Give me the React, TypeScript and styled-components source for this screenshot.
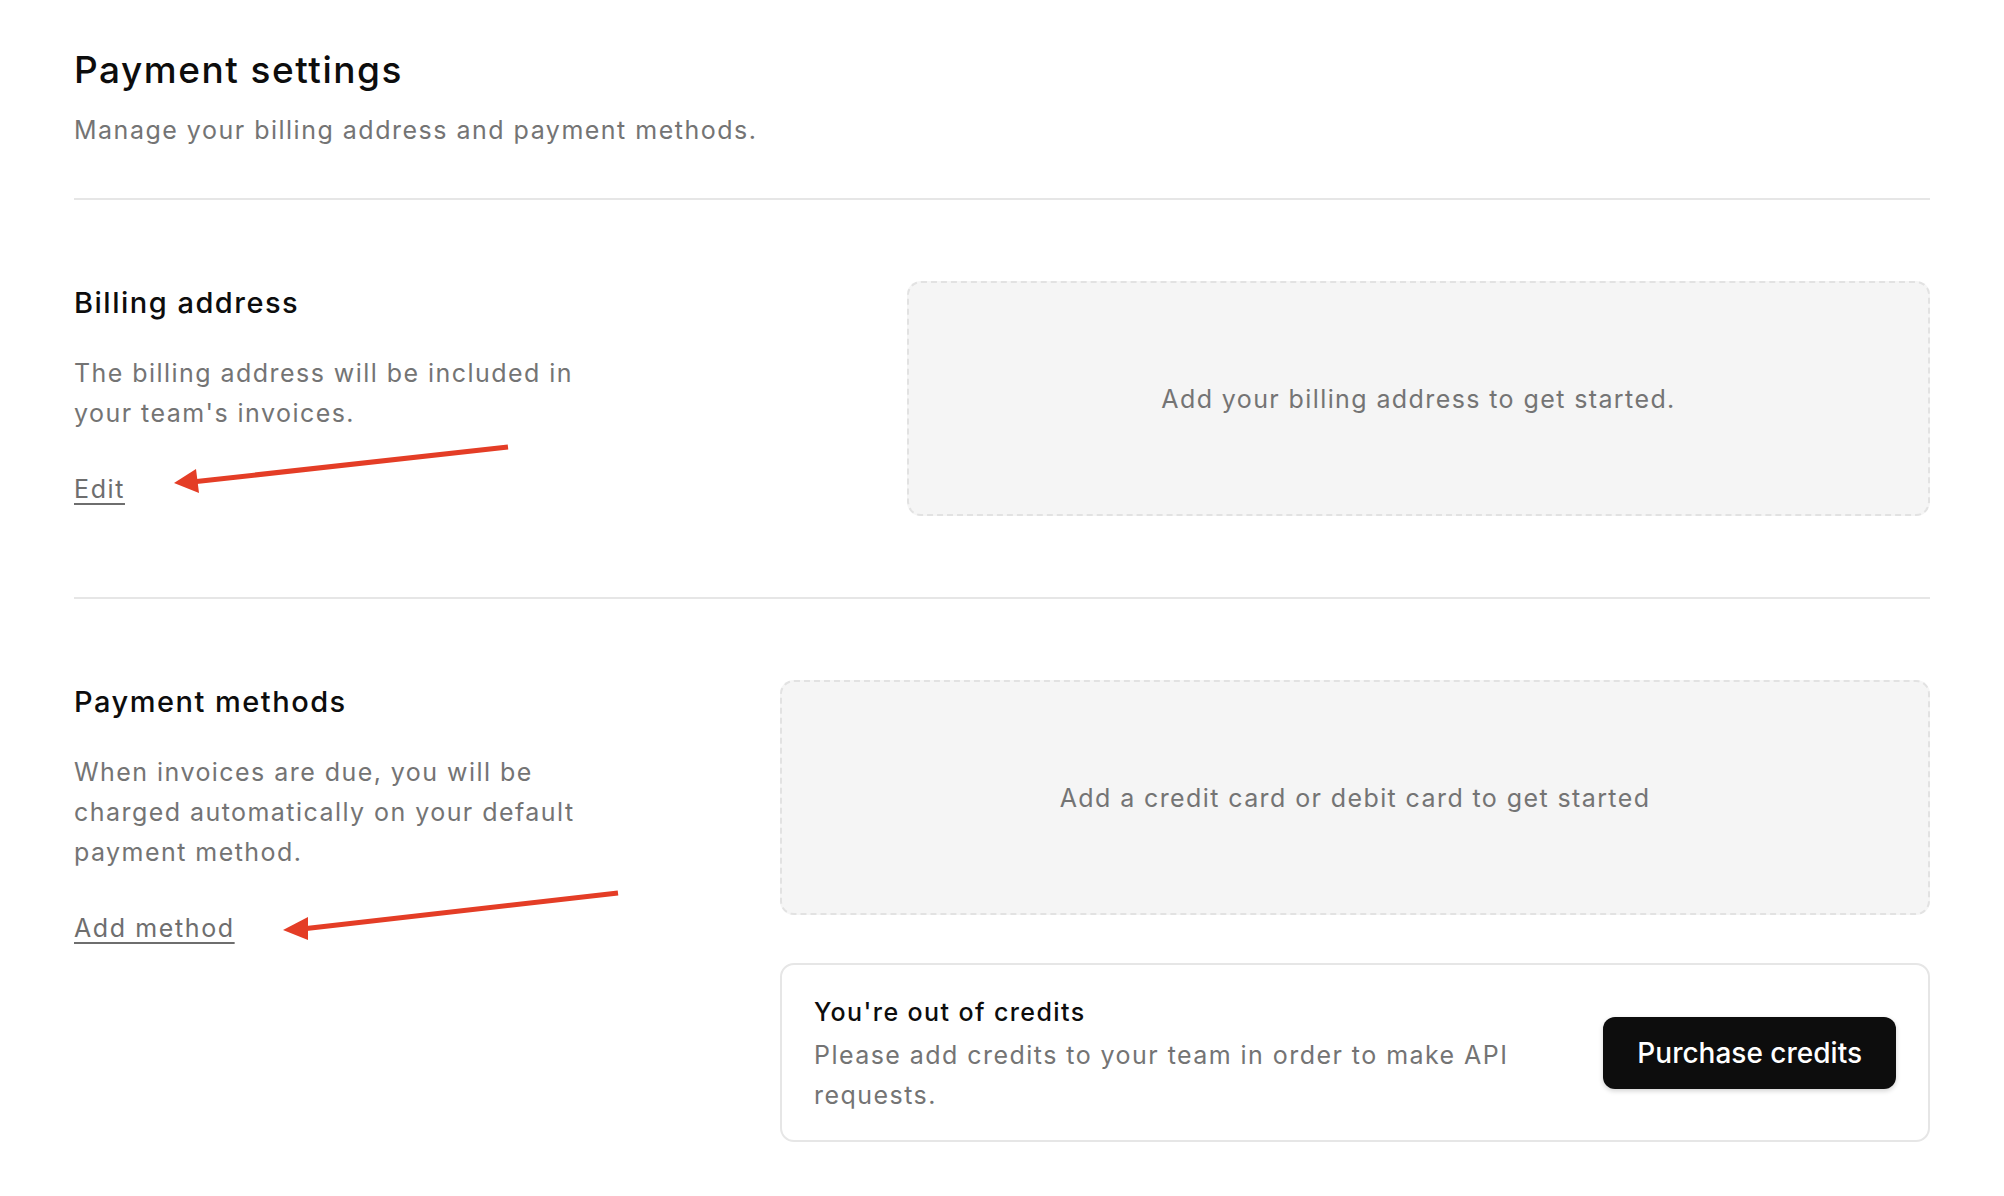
import React from "react";
import styled, { createGlobalStyle } from "styled-components";

const GlobalStyle = createGlobalStyle`
  html, body {
    margin: 0;
    padding: 0;
    background: #ffffff;
  }
  body {
    font-family: Inter, "Noto Sans", "Liberation Sans", sans-serif;
    color: #0d0d0d;
    -webkit-font-smoothing: antialiased;
  }
  * { box-sizing: border-box; }
`;

const Page = styled.main`
  padding: 48px 74px 0;
`;

const Header = styled.header`
  display: flex;
  flex-direction: column;
  gap: 18px;
  padding-bottom: 48px;
`;

const Title = styled.h1`
  margin: 0;
  font-size: 37px;
  line-height: 44px;
  letter-spacing: 1.5px;
  font-weight: 500;
  color: #0d0d0d;
`;

const Subtitle = styled.p`
  margin: 0;
  font-size: 25px;
  line-height: 40px;
  letter-spacing: 1.5px;
  color: #747474;
`;

const Divider = styled.hr`
  margin: 0;
  border: 0;
  height: 2px;
  background: #e6e6e6;
`;

const Row = styled.section`
  display: flex;
  align-items: flex-start;
  padding: 81px 0;

  &:last-of-type {
    padding-bottom: 40px;
  }
`;

const Aside = styled.div<{ $width: number }>`
  position: relative;
  flex: 0 0 ${(p) => p.$width}px;
  display: flex;
  flex-direction: column;
  align-items: flex-start;
`;

const SectionTitle = styled.h2`
  margin: 0;
  font-size: 29px;
  line-height: 44px;
  letter-spacing: 1.5px;
  font-weight: 500;
  color: #0d0d0d;
`;

const SectionText = styled.p`
  margin: 28px 0 0;
  max-width: 530px;
  font-size: 25px;
  line-height: 40px;
  letter-spacing: 1.45px;
  color: #747474;
`;

const TextLink = styled.a`
  margin-top: 36px;
  font-size: 25px;
  line-height: 40px;
  letter-spacing: 1.6px;
  color: #6e6e6e;
  text-decoration: underline;
  text-decoration-thickness: 2px;
  text-underline-offset: 5px;
  cursor: pointer;
`;

const Content = styled.div`
  flex: 1 1 auto;
  display: flex;
  flex-direction: column;
  gap: 48px;
`;

const EmptyBox = styled.div`
  height: 235px;
  display: flex;
  align-items: center;
  justify-content: center;
  background: #f5f5f5;
  border: 2px dashed #e2e2e2;
  border-radius: 14px;
  font-size: 25px;
  line-height: 40px;
  letter-spacing: 1.4px;
  color: #747474;
`;

const CreditsCard = styled.div`
  display: flex;
  align-items: center;
  justify-content: space-between;
  gap: 60px;
  padding: 25px 32px;
  border: 2px solid #e6e6e6;
  border-radius: 14px;
  background: #ffffff;
`;

const CreditsText = styled.div`
  flex: 1 1 auto;
  display: flex;
  flex-direction: column;
  gap: 9px;
  padding-top: 8px;
`;

const CreditsTitle = styled.h3`
  margin: 0;
  font-size: 25px;
  line-height: 28px;
  letter-spacing: 1.4px;
  font-weight: 500;
  color: #0d0d0d;
`;

const CreditsDesc = styled.p`
  margin: 0;
  font-size: 25px;
  line-height: 40px;
  letter-spacing: 1.45px;
  color: #747474;
`;

const PrimaryButton = styled.button`
  flex: 0 0 auto;
  height: 72px;
  padding: 0 34px;
  border: 0;
  border-radius: 12px;
  background: #0d0d0d;
  color: #ffffff;
  font-family: inherit;
  font-size: 28px;
  font-weight: 500;
  box-shadow: 0 2px 5px rgba(0, 0, 0, 0.18);
  cursor: pointer;
`;

const ArrowLayer = styled.svg`
  position: absolute;
  left: 0;
  top: 0;
  overflow: visible;
  pointer-events: none;
`;

type ArrowProps = {
  tail: [number, number];
  base: [number, number];
  tip: [number, number];
  c1: [number, number];
  c2: [number, number];
};

const Arrow = ({ tail, base, tip, c1, c2 }: ArrowProps) => (
  <ArrowLayer width="1" height="1">
    <line
      x1={tail[0]}
      y1={tail[1]}
      x2={base[0]}
      y2={base[1]}
      stroke="#e43d26"
      strokeWidth="5"
      strokeLinecap="butt"
    />
    <polygon
      points={`${tip[0]},${tip[1]} ${c1[0]},${c1[1]} ${c2[0]},${c2[1]}`}
      fill="#e43d26"
    />
  </ArrowLayer>
);

export default function App() {
  return (
    <>
      <GlobalStyle />
      <Page>
        <Header>
          <Title>Payment settings</Title>
          <Subtitle>Manage your billing address and payment methods.</Subtitle>
        </Header>
        <Divider />
        <Row>
          <Aside $width={833}>
            <SectionTitle>Billing address</SectionTitle>
            <SectionText>
              The billing address will be included in your team's invoices.
            </SectionText>
            <TextLink>Edit</TextLink>
            <Arrow
              tail={[434, 166]}
              base={[118, 201]}
              tip={[100, 202]}
              c1={[122, 188]}
              c2={[125, 212]}
            />
          </Aside>
          <Content>
            <EmptyBox>Add your billing address to get started.</EmptyBox>
          </Content>
        </Row>
        <Divider />
        <Row>
          <Aside $width={706}>
            <SectionTitle>Payment methods</SectionTitle>
            <SectionText>
              When invoices are due, you will be charged automatically on your
              default payment method.
            </SectionText>
            <TextLink>Add method</TextLink>
            <Arrow
              tail={[544, 213]}
              base={[228, 249]}
              tip={[209, 250]}
              c1={[234, 237]}
              c2={[234, 260]}
            />
          </Aside>
          <Content>
            <EmptyBox>Add a credit card or debit card to get started</EmptyBox>
            <CreditsCard>
              <CreditsText>
                <CreditsTitle>You're out of credits</CreditsTitle>
                <CreditsDesc>
                  Please add credits to your team in order to make API requests.
                </CreditsDesc>
              </CreditsText>
              <PrimaryButton>Purchase credits</PrimaryButton>
            </CreditsCard>
          </Content>
        </Row>
      </Page>
    </>
  );
}
